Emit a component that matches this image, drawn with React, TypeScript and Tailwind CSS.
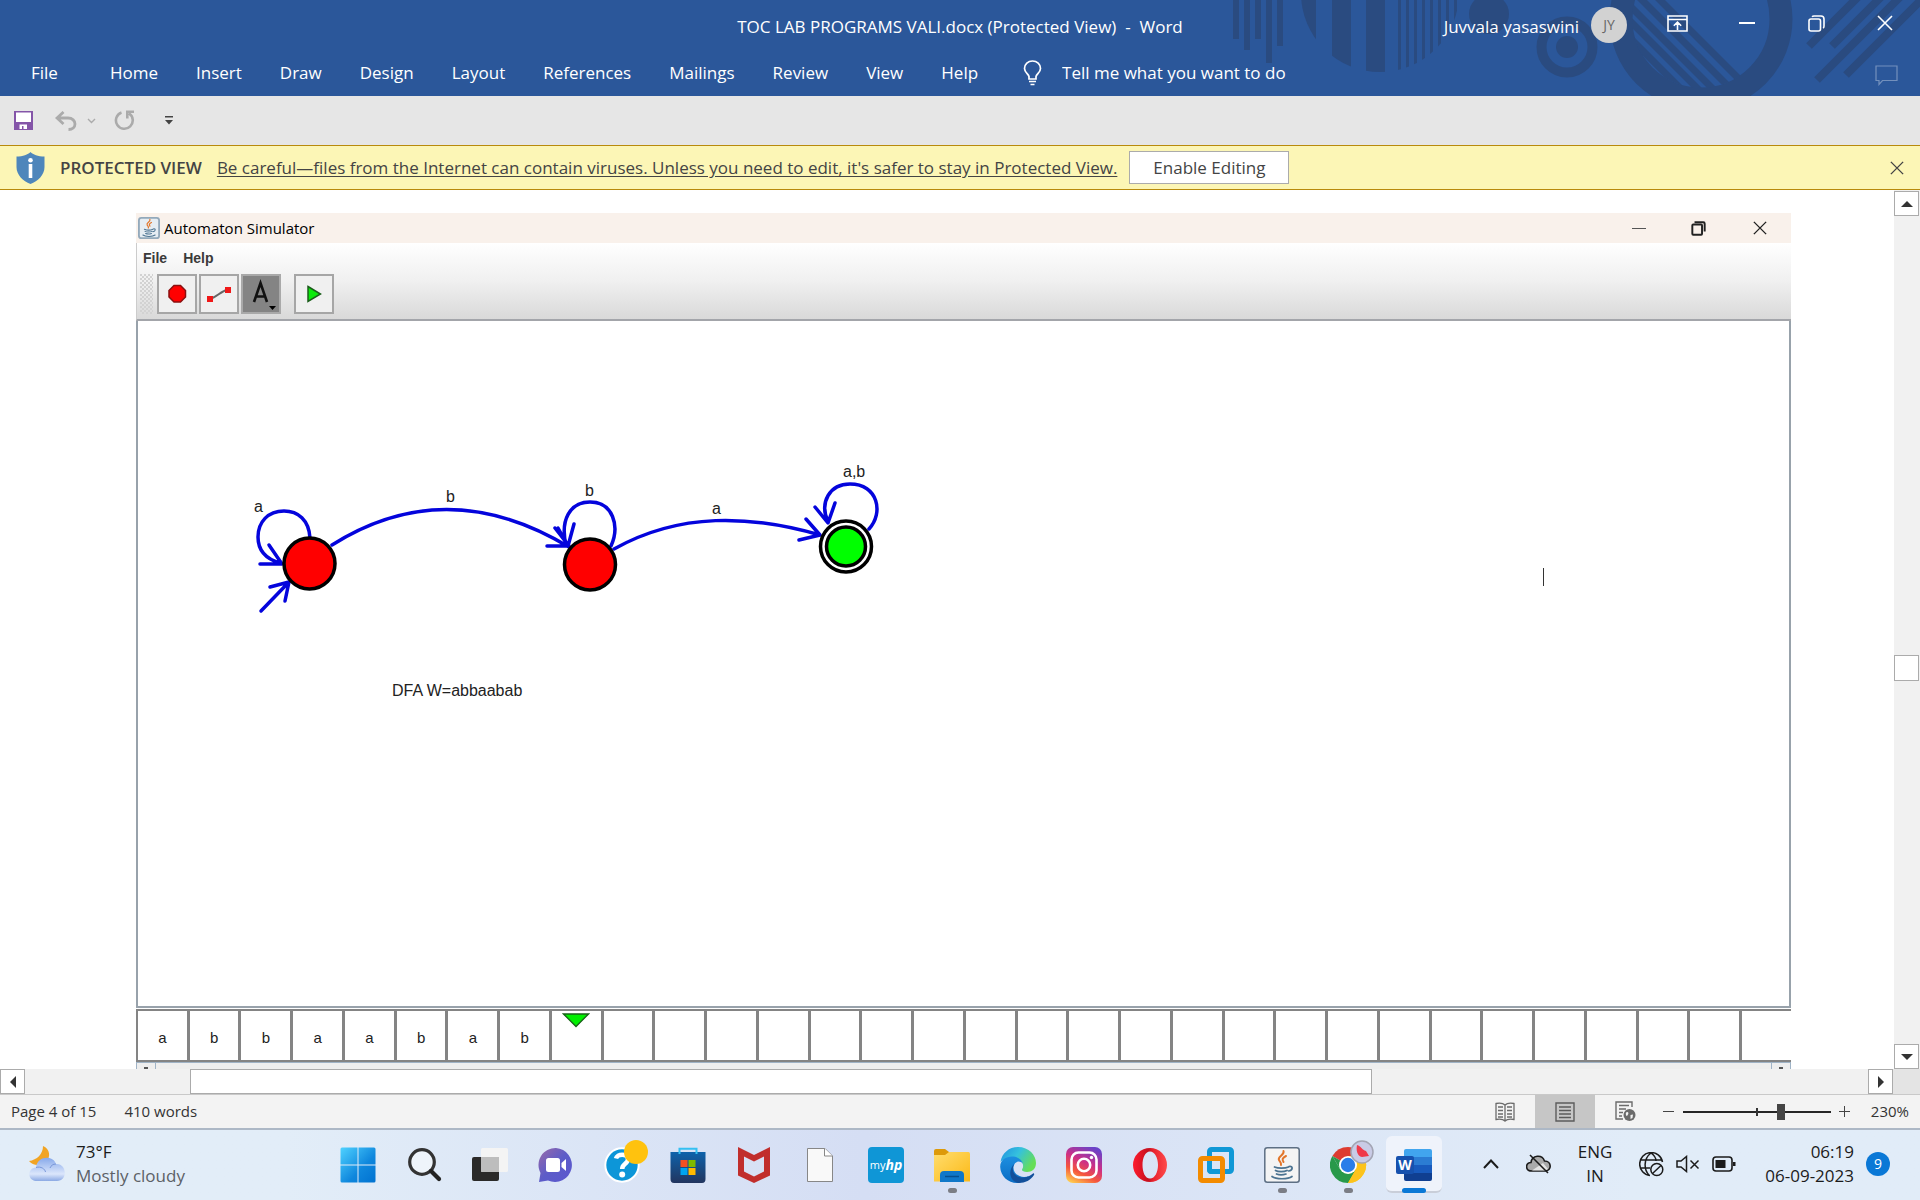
import type { ReactNode } from "react";

const ribbonTabs = ["Home", "Insert", "Draw", "Design", "Layout", "References", "Mailings", "Review", "View", "Help"];
const tape = ["a", "b", "b", "a", "a", "b", "a", "b"];
const TAPE_CELLS = 32;
const HEAD = 8;

function CloseGlyph({ size }: { size: number }) {
  return (
    <svg width={size} height={size} viewBox="0 0 16 16" fill="none" stroke="currentColor" strokeWidth="1.6">
      <path d="M1 1L15 15M15 1L1 15" />
    </svg>
  );
}

function RestoreGlyph() {
  return (
    <svg width="17" height="17" viewBox="0 0 17 17" fill="none" stroke="currentColor" strokeWidth="1.6">
      <rect x="1" y="4" width="11.5" height="12" rx="2" />
      <path d="M4 1.8C4.6 1.2 5.3 1 6 1H13C15 1 16 2.200 16 4V11C16 12 15.800 12.600 15.200 13.200" />
    </svg>
  );
}

function HeaderArt() {
  return (
    <svg className="absolute right-0 top-0" width="720" height="96" viewBox="1200 0 720 96" fill="#2a4b80" aria-hidden="true">
      <defs>
        <clipPath id="disc"><circle cx="1380" cy="-7" r="79" /></clipPath>
        <clipPath id="ring"><circle cx="1701" cy="19" r="69" /></clipPath>
      </defs>
      <path d="M1233 0h6v39h-6zM1244 0h6v50h-6zM1255 0h6v39h-6zM1266 0h6v63h-6zM1277 0h6v46h-6z" />
      <g clipPath="url(#disc)">
        <path d="M1300 0h16v96h-16zM1332 0h19v96h-19zM1366 0h19v96h-19zM1398 0h3v96h-3zM1406 0h3v96h-3zM1414 0h3v96h-3zM1422 0h3v96h-3zM1430 0h3v96h-3zM1438 0h3v96h-3zM1446 0h3v96h-3zM1454 0h3v96h-3z" />
      </g>
      <circle cx="1489" cy="14" r="20" />
      <circle cx="1567" cy="47" r="25.500" fill="none" stroke="#2a4b80" strokeWidth="10" />
      <circle cx="1567" cy="47" r="11" />
      <circle cx="1701" cy="19" r="80" fill="none" stroke="#2a4b80" strokeWidth="23" />
      <g clipPath="url(#ring)" stroke="#2a4b80" strokeWidth="7">
        <path d="M1650 -10L1760 100M1632 -10L1742 100M1614 -10L1724 100M1599 -10L1709 100M1582 -10L1692 100" />
      </g>
      <g stroke="#2a4b80" strokeWidth="8">
        <path d="M1809 46L1865 -10M1832 46L1888 -10M1817 80L1907 -10M1846 75L1930 -9" />
      </g>
    </svg>
  );
}

function TitleBar() {
  return (
    <header className="relative h-24 shrink-0 overflow-hidden bg-[#2b579a] text-white">
      <HeaderArt />
      <div className="relative grid h-[54px] grid-cols-[1fr_auto_1fr] items-center">
        <span />
        <h1 className="whitespace-pre text-[17px] leading-6">TOC LAB PROGRAMS VALI.docx (Protected View)  -  Word</h1>
        <div className="flex items-center justify-end pr-[27px]">
          <span className="text-[17px] leading-6">Juvvala yasaswini</span>
          <span className="ml-3 -mt-1 flex size-9 items-center justify-center rounded-full bg-[#d2d2d2] text-sm text-[#666]">JY</span>
          <button aria-label="Ribbon display options" className="ml-10 -mt-2">
            <svg width="21" height="17" viewBox="0 0 21 17" fill="none" stroke="currentColor" strokeWidth="1.600">
              <path d="M1 1H20V16H1ZM1 4.500H20M10.500 15V7.500M6.800 10.800L10.500 7.200L14.200 10.800" />
            </svg>
          </button>
          <button aria-label="Minimize" className="ml-[51px] -mt-2 flex h-4 w-4 items-center"><span className="h-0.5 w-full bg-white" /></button>
          <button aria-label="Restore" className="ml-[53px] -mt-2"><RestoreGlyph /></button>
          <button aria-label="Close" className="ml-[52px] -mt-2"><CloseGlyph size={16} /></button>
        </div>
      </div>
      <nav className="relative flex h-[42px] items-center pb-1 pl-[31px] text-[17px]">
        <button>File</button>
        <div className="ml-[52px] flex gap-[38px]">
          {ribbonTabs.map((t) => <button key={t}>{t}</button>)}
        </div>
        <label className="ml-[45px] flex items-center gap-5">
          <svg width="19" height="26" viewBox="0 0 19 26" fill="none" stroke="currentColor" strokeWidth="1.700">
            <path d="M6 19V16.500C5.500 14 1.500 12.500 1.500 8.500C1.500 4 5 1 9.500 1S17.500 4 17.500 8.500C17.500 12.500 13.500 14 13 16.500V19ZM6 21.500H13M7.500 24.500H11.500" />
          </svg>
          <input aria-label="Tell me what you want to do" placeholder="Tell me what you want to do" className="w-64 bg-transparent outline-none placeholder:text-white" />
        </label>
        <button aria-label="Comments" className="ml-auto mr-[22px] mt-1 text-[#7390bd]">
          <svg width="23" height="21" viewBox="0 0 23 21" fill="none" stroke="currentColor" strokeWidth="1.200">
            <path d="M1 1H22V15.500H7.500L4 19.500V15.500H1Z" />
          </svg>
        </button>
      </nav>
    </header>
  );
}

function QuickAccess() {
  return (
    <div className="flex h-[49px] shrink-0 items-center bg-[#e6e6e6] pl-3.5 text-[#ababab]">
      <button aria-label="Save">
        <svg width="19" height="19" viewBox="0 0 19 19">
          <path d="M0 0H19V19H0Z" fill="#8455a8" />
          <path d="M2 1.500H17V11H2ZM5.500 13.500H13V18H9.500V15H8V18H5.500Z" fill="#fff" />
        </svg>
      </button>
      <button aria-label="Undo" className="ml-[22px]">
        <svg width="22" height="20" viewBox="0 0 22 20" fill="none" stroke="currentColor" strokeWidth="2.800">
          <path d="M8.500 1L2 7L8.500 13M2 7H13C17.500 7 20 10 20 13S17.500 18.500 13.500 18.500" />
        </svg>
      </button>
      <button aria-label="Undo history" className="ml-2.5">
        <svg width="9" height="6" viewBox="0 0 9 6" fill="none" stroke="currentColor" strokeWidth="1.400"><path d="M1 1L4.500 4.500L8 1" /></svg>
      </button>
      <button aria-label="Repeat" className="ml-[18px]">
        <svg width="21" height="21" viewBox="0 0 21 21" fill="none" stroke="currentColor" strokeWidth="2.600">
          <path d="M7.500 2.500A8.400 8.400 0 1 0 15 3.400M20 1.800H13.300V8.500" />
        </svg>
      </button>
      <button aria-label="Customize Quick Access Toolbar" className="ml-[30px] text-[#444]">
        <svg width="8" height="9" viewBox="0 0 8 9" fill="currentColor"><path d="M0 0H8V1.500H0ZM0 4H8L4 8.500Z" /></svg>
      </button>
    </div>
  );
}

function ProtectedBar() {
  return (
    <div className="flex h-[45px] shrink-0 items-center border-y border-[#b88a0c] bg-[#fcf6b6] text-[17px] text-[#444]">
      <svg className="ml-4" width="29" height="32" viewBox="0 0 29 32">
        <path d="M14.500 0C17 2.500 22 4.500 28.500 4.500V15C28.500 23 22 29 14.500 32C7 29 .5 23 .5 15V4.500C7 4.500 12 2.500 14.500 0Z" fill="#4e86bb" />
        <path d="M12.700 12H16.300V26H12.700Z" fill="#fff" /><circle cx="14.500" cy="8.200" r="2.300" fill="#fff" />
      </svg>
      <span className="ml-[15px] font-semibold">PROTECTED VIEW</span>
      <a href="#protected" className="ml-[15px] underline underline-offset-2">Be careful—files from the Internet can contain viruses. Unless you need to edit, it's safer to stay in Protected View.</a>
      <button className="ml-3 h-[33px] w-40 border border-[#ababab] bg-white">Enable Editing</button>
      <button aria-label="Close message" className="ml-auto mr-4"><CloseGlyph size={14} /></button>
    </div>
  );
}

function JavaCup() {
  return (
    <g fill="none" strokeLinecap="round">
      <path d="M19.500 4C21 8 13 9.500 15 13C16 15 17.500 15.500 17 18M22 9C18 11 18 12.500 19.500 15" stroke="#e2762b" strokeWidth="2" />
      <path d="M10.500 20C14 21.500 21 21.500 24.500 20M11.500 23.500C14 25 20 25 23 23.500M12.500 27C15 28 19 28 22 27M25 19.500C29.500 18.500 29 23.500 24.500 24M8 29.500C12 32.500 24 32.500 28 29.500" stroke="#4b7391" strokeWidth="1.700" />
    </g>
  );
}

function ToolButton({ label, active, children, className = "" }: { label: string; active?: boolean; children: ReactNode; className?: string }) {
  return (
    <button aria-label={label} className={`flex size-10 items-center justify-center border-2 ${active ? "border-[#a9a9a9] bg-[#848484]" : "border-[#a6a6a6] bg-[#f0f0f0]"} ${className}`}>
      {children}
    </button>
  );
}

function Automaton() {
  return (
    <svg width="800" height="420" viewBox="138 321 800 420" role="img" aria-label="Automaton with three states">
      <g fill="none" stroke="#0404dc" strokeWidth="3.500" strokeLinecap="round" strokeLinejoin="round">
        <path d="M310 538C309 520 298 511 284 511C268 511 258 522 258 537C258 550 266 559 280 563M260 564H282L269 545" />
        <path d="M261 611L289 582M270 587L289 582L285 601" />
        <path d="M332 545Q446 473 569 547M547 546H569L555 528" />
        <path d="M611 546C620 526 613 502 590 502C570 502 560 520 566 545M558 528L568 546L574 524" />
        <path d="M614 549C680 512 750 515 820 535M799 540L820 535L806 519" />
        <path d="M869 529C884 513 878 484 850 484C830 484 819 502 828 522M815 507L828 523L835 503" />
      </g>
      <g stroke="#000" strokeWidth="3.500">
        <circle cx="309.500" cy="563.500" r="25.500" fill="#f00" />
        <circle cx="590" cy="564.500" r="25.500" fill="#f00" />
        <circle cx="846" cy="546.500" r="25.500" fill="#fff" />
        <circle cx="846" cy="546.500" r="19.500" fill="#0f0" />
      </g>
      <g className="fill-[#222] font-['Liberation_Sans',Arial,sans-serif] text-base">
        <text x="254" y="512">a</text>
        <text x="446" y="502">b</text>
        <text x="585" y="496">b</text>
        <text x="712" y="514">a</text>
        <text x="843" y="477">a,b</text>
        <text x="392" y="696">DFA W=abbaabab</text>
      </g>
    </svg>
  );
}

function Simulator() {
  return (
    <section className="mt-[23px] ml-[136px] mr-[103px] flex min-w-0 flex-1 flex-col overflow-hidden bg-white">
      <div className="flex h-[30px] shrink-0 items-center bg-[#f9f1eb] pl-0.5 text-black">
        <svg width="22" height="22" viewBox="0 0 36 36">
          <rect x="1.500" y="1.500" width="33" height="33" rx="4" fill="#e6edf3" stroke="#93a9bb" strokeWidth="3" />
          <JavaCup />
        </svg>
        <h2 className="ml-1 text-[15px] leading-6">Automaton Simulator</h2>
        <div className="ml-auto mr-6 flex items-center text-[#222]">
          <button aria-label="Minimize window" className="flex h-4 w-3.5 items-center"><span className="h-px w-full bg-[#555]" /></button>
          <button aria-label="Restore window" className="ml-[45px]">
            <svg width="15" height="15" viewBox="0 0 17 17" fill="none" stroke="currentColor" strokeWidth="2.200">
              <rect x="1.500" y="4" width="11" height="11.500" rx="1" /><path d="M4 1.500H14Q15.500 1.500 15.500 3V12" />
            </svg>
          </button>
          <button aria-label="Close window" className="ml-[47px]"><CloseGlyph size={14} /></button>
        </div>
      </div>
      <div className="h-[78px] shrink-0 border-b-2 border-[#a3a5aa] border-l border-l-[#ccc] bg-linear-to-b from-white via-[#f0f0f0] to-[#d9d9d9]">
        <div className="flex gap-4 pl-1.5 pt-[3px] font-['Liberation_Sans',Arial,sans-serif] text-sm leading-6 font-bold text-[#3a3a3a]">
          <button>File</button>
          <button>Help</button>
        </div>
        <div className="flex items-center pt-1 pl-[3px]">
          <svg width="13" height="40" aria-hidden="true">
            <defs><pattern id="grip" width="4" height="4" patternUnits="userSpaceOnUse"><path d="M0 0h2v2h-2zM2 2h2v2h-2z" fill="#d2d2d2" /></pattern></defs>
            <rect width="13" height="40" fill="url(#grip)" />
          </svg>
          <ToolButton label="State" className="ml-1">
            <svg width="20" height="20" viewBox="0 0 20 20"><path d="M7 1.500H13.500L18.500 6.500V13L13.500 18H7L2 13V6.500Z" fill="#f00" stroke="#8b0f0f" strokeWidth="1.500" /></svg>
          </ToolButton>
          <ToolButton label="Transition" className="ml-0.5">
            <svg width="24" height="16" viewBox="0 0 24 16"><path d="M3 13C10 11 14 5 21 3.500" stroke="#666" strokeWidth="2" fill="none" /><path d="M0 10h6v6H0zM18 1h6v6h-6z" fill="#f01818" /></svg>
          </ToolButton>
          <ToolButton label="Label" active className="ml-0.5">
            <svg width="34" height="34" viewBox="0 0 34 34"><path d="M10 25L16.500 6L23 25M12 19.500H21" fill="none" stroke="#111" strokeWidth="2.600" /><path d="M25 29H32L28.500 33Z" fill="#000" /></svg>
          </ToolButton>
          <ToolButton label="Run" className="ml-[13px]">
            <svg width="16" height="18" viewBox="0 0 16 18"><path d="M2 1.500L14.500 9L2 16.500Z" fill="#0bea0b" stroke="#1b5e1b" strokeWidth="1.500" /></svg>
          </ToolButton>
        </div>
      </div>
      <div className="relative min-h-0 flex-1 overflow-hidden border-x-2 border-b-2 border-[#98a2ab] bg-white">
        <Automaton />
        <span className="absolute top-[247px] right-[245px] h-[18px] w-px bg-[#333]" />
      </div>
      <div className="mt-px grid h-[53px] shrink-0 grid-cols-[repeat(31,minmax(0,1fr))_49px] border-y-2 border-l-2 border-[#848484]">
        {Array.from({ length: TAPE_CELLS }, (_, i) => (
          <div key={i} className="relative flex items-center justify-center border-r-[3px] border-[#848484] pt-1.5 font-['Liberation_Sans',Arial,sans-serif] text-[15px] text-[#222] last:border-r-0">
            {tape[i]}
            {i === HEAD && (
              <svg className="absolute top-0.5 left-1/2 -translate-x-1/2" width="28" height="15" viewBox="0 0 28 15"><path d="M1.500 1H26.500L14 13.500Z" fill="#00f000" stroke="#176117" strokeWidth="1.300" /></svg>
            )}
          </div>
        ))}
      </div>
      <div className="flex h-[7px] shrink-0 justify-between border-x border-t border-[#9fb3c6] bg-[#eeeeee]">
        <span className="flex w-[19px] justify-center border-r border-[#9fb3c6] pt-1"><span className="h-[3px] w-1 bg-[#555]" /></span>
        <span className="flex w-[19px] justify-center border-l border-[#9fb3c6] pt-1"><span className="h-[3px] w-1 bg-[#555]" /></span>
      </div>
    </section>
  );
}

function ScrollArrow({ label, d }: { label: string; d: string }) {
  return (
    <button aria-label={label} className="flex h-[25px] w-[25px] shrink-0 items-center justify-center border border-[#ababab] bg-white">
      <svg width="12" height="12" viewBox="0 0 12 12" fill="#333"><path d={d} /></svg>
    </button>
  );
}

function DocumentArea() {
  return (
    <main className="flex min-h-0 flex-1 flex-col bg-white">
      <div className="flex min-h-0 flex-1">
        <Simulator />
        <div className="flex w-[26px] shrink-0 flex-col bg-[#f1f1f1] pt-px">
          <ScrollArrow label="Scroll up" d="M0 9L6 3L12 9Z" />
          <div className="flex-[438]" />
          <div className="h-[26px] w-[25px] border border-[#ababab] bg-white" />
          <div className="flex-[363]" />
          <ScrollArrow label="Scroll down" d="M0 3L6 9L12 3Z" />
        </div>
      </div>
      <div className="flex h-[26px] shrink-0 border-b border-[#c9c9c9] bg-[#f1f1f1]">
        <ScrollArrow label="Scroll left" d="M9 0L3 6L9 12Z" />
        <div className="flex-[165]" />
        <div className="h-[25px] flex-[1181] border border-[#ababab] bg-white" />
        <div className="flex-[497]" />
        <ScrollArrow label="Scroll right" d="M3 0L9 6L3 12Z" />
        <div className="w-[27px] bg-[#e4e4e4]" />
      </div>
    </main>
  );
}

function StatusBar() {
  return (
    <footer className="flex h-[35px] shrink-0 items-center border-b-2 border-[#adb8c6] bg-[#f3f3f3] pr-[11px] pl-[11px] text-[15px] text-[#333]">
      <button>Page 4 of 15</button>
      <button className="ml-7">410 words</button>
      <button aria-label="Read mode" className="ml-auto flex h-full w-[60px] items-center justify-center text-[#6b6b6b]">
        <svg width="20" height="20" viewBox="0 0 20 20" fill="none" stroke="currentColor" strokeWidth="1.300">
          <path d="M10 2.500V19.500M10 3C8 1 4 1 1 1.500V17.500C4 17 8 17 10 19C12 17 16 17 19 17.500V1.500C16 1 12 1 10 3M3 5H8M3 8.500H8M3 12H8M12 5H17M12 8.500H17M12 12H17M3 15H8M12 15H17" />
        </svg>
      </button>
      <button aria-label="Print layout" className="flex h-full w-[60px] items-center justify-center bg-[#c6c6c6] text-[#5c5c5c]">
        <svg width="20" height="20" viewBox="0 0 20 20" fill="none" stroke="currentColor" strokeWidth="1.400">
          <path d="M1 1H19V19H1ZM4 5H16M4 8.500H16M4 12H16M4 15.500H16" />
        </svg>
      </button>
      <button aria-label="Web layout" className="flex h-full w-[60px] items-center justify-center text-[#6b6b6b]">
        <svg width="21" height="21" viewBox="0 0 21 21" fill="none" stroke="currentColor" strokeWidth="1.400">
          <path d="M8 18H1V1H17V6M4 4.500H14M4 8H11M4 11.500H8M4 15H7" />
          <circle cx="14.500" cy="14" r="6" fill="#6b6b6b" stroke="none" />
          <path d="M11 11.500C13 10 14 12 13 13.500L12 15C11 15 10.500 13 11 11.500ZM15.500 14L18 13.500L17.500 17L15.500 18Z" fill="#f3f3f3" stroke="none" />
        </svg>
      </button>
      <button aria-label="Zoom out" className="ml-2 flex h-4 w-[11px] items-center"><span className="h-px w-full bg-[#444]" /></button>
      <span className="relative ml-[9px] flex w-[148px] items-center">
        <span className="absolute left-[73px] h-2 w-0.5 bg-[#333]" />
        <input type="range" aria-label="Zoom" aria-valuetext="230%" min="0" max="100" defaultValue="67" className="h-4 w-full appearance-none bg-[linear-gradient(#262626,#262626)] bg-[length:100%_2px] bg-center bg-no-repeat [&::-webkit-slider-thumb]:h-4 [&::-webkit-slider-thumb]:w-2 [&::-webkit-slider-thumb]:appearance-none [&::-webkit-slider-thumb]:bg-[#444]" />
      </span>
      <button aria-label="Zoom in" className="ml-2">
        <svg width="11" height="11" viewBox="0 0 11 11" stroke="#444" strokeWidth="1"><path d="M5.500 0V11M0 5.500H11" /></svg>
      </button>
      <button className="w-[59px] text-right">230%</button>
    </footer>
  );
}

function Svg({ children }: { children: ReactNode }) {
  return <svg width="36" height="36" viewBox="0 0 36 36">{children}</svg>;
}

function BadgedSvg({ children }: { children: ReactNode }) {
  return <svg width="44" height="44" viewBox="0 0 44 44" className="-mt-2 max-w-none shrink-0">{children}</svg>;
}

const apps: { name: string; icon: ReactNode; state?: "open" | "active" }[] = [
  {
    name: "Start",
    icon: (
      <Svg>
        <defs><linearGradient id="win" x1="0" y1="0" x2="1" y2="1"><stop offset="0" stopColor="#4fd2ff" /><stop offset=".6" stopColor="#0f87dd" /><stop offset="1" stopColor="#0072d0" /></linearGradient></defs>
        <path d="M.5 2Q.5 .5 2 .5H17.500V17.500H.5ZM18.500 .5H34Q35.500 .5 35.500 2V17.500H18.500ZM.5 18.500H17.500V35.500H2Q.5 35.500 .5 34ZM18.500 18.500H35.500V34Q35.500 35.500 34 35.500H18.500Z" fill="url(#win)" />
      </Svg>
    ),
  },
  {
    name: "Search",
    icon: <Svg><circle cx="16" cy="15" r="12.300" fill="#eef4fa" stroke="#333" strokeWidth="3.200" /><path d="M25 24L33 32" stroke="#222" strokeWidth="4.200" strokeLinecap="round" /></Svg>,
  },
  {
    name: "Task view",
    icon: <Svg><rect x="0" y="10" width="27" height="24" rx="2" fill="#2b2a29" /><rect x="9" y="1" width="27" height="24" rx="1.500" fill="#f4f4f4" /><path d="M9 10H27V25H10.500Q9 25 9 23.500Z" fill="#bdbdbd" /></Svg>,
  },
  {
    name: "Chat",
    icon: (
      <Svg>
        <defs><linearGradient id="chat" x1="0" y1="0" x2="1" y2="1"><stop offset="0" stopColor="#9b6aa8" /><stop offset=".5" stopColor="#5c5cc8" /><stop offset="1" stopColor="#5b57cf" /></linearGradient></defs>
        <path d="M18 1A17 17 0 1 1 10 33.500L1 35L2.500 26A17 17 0 0 1 18 1Z" fill="url(#chat)" />
        <rect x="8" y="11" width="14" height="14" rx="2.500" fill="#fff" /><path d="M23.500 16L28 12V24L23.500 20Z" fill="#fff" />
      </Svg>
    ),
  },
  {
    name: "Help and support",
    icon: (
      <BadgedSvg>
        <circle cx="18" cy="26" r="16.700" fill="#0d96d8" stroke="#fff" strokeWidth="2" />
        <path d="M12 19.500C13 14.500 23.500 14 24 20C24 25 18 24.500 18.200 30" fill="none" stroke="#fff" strokeWidth="4.500" /><circle cx="18.200" cy="35.500" r="3" fill="#fff" />
        <circle cx="32" cy="13" r="12" fill="#ffc20e" />
      </BadgedSvg>
    ),
  },
  {
    name: "Microsoft Store",
    icon: (
      <Svg>
        <defs><linearGradient id="store" x1="0" y1="0" x2="0" y2="1"><stop offset="0" stopColor="#0e62ab" /><stop offset="1" stopColor="#22355f" /></linearGradient></defs>
        <path d="M.5 5H35.500V32Q35.500 36 32 36H4Q.5 36 .5 32Z" fill="url(#store)" />
        <path d="M9.500 7V1.800H26.500V7" fill="none" stroke="#35c0f2" strokeWidth="2" />
        <path d="M10.500 13h7v7h-7z" fill="#f25022" /><path d="M18.500 13h7v7h-7z" fill="#7fba00" /><path d="M10.500 21h7v7h-7z" fill="#00a4ef" /><path d="M18.500 21h7v7h-7z" fill="#ffb900" />
      </Svg>
    ),
  },
  {
    name: "McAfee",
    icon: <Svg><path d="M2 0L18 8L34 0V28.500L18 36L2 28.500ZM8 9.500V24.500L18 29.500L28 24.500V9.500L18 14.500Z" fill="#c12e2c" fillRule="evenodd" /></Svg>,
  },
  {
    name: "Document",
    icon: <Svg><path d="M5.500 1.500H23L30.500 9V34.500H5.500Z" fill="#f9f9f9" stroke="#878787" /><path d="M22.500 1.500V9H30.500" fill="#fff" stroke="#878787" /></Svg>,
  },
  {
    name: "myHP",
    icon: <span className="flex size-9 items-center justify-center rounded-sm bg-[#0f96d6] text-[11px] text-white">my<b className="text-sm italic">hp</b></span>,
  },
  {
    name: "File Explorer",
    state: "open",
    icon: (
      <Svg>
        <defs><linearGradient id="fold" x1="0" y1="0" x2="1" y2="1"><stop offset="0" stopColor="#ffdd6e" /><stop offset="1" stopColor="#fbb917" /></linearGradient></defs>
        <path d="M0 4Q0 2 2 2H11L15 5V12H0Z" fill="#dd9a0a" /><path d="M0 8H11L15 5H34.500Q36 5 36 7V34.500H0Z" fill="url(#fold)" />
        <path d="M6 35V28Q6 24 10 24H26Q30 24 30 28V35Z" fill="#0f77c9" /><path d="M11 29.500H25" stroke="#054f8f" strokeWidth="1.500" />
      </Svg>
    ),
  },
  {
    name: "Microsoft Edge",
    icon: (
      <Svg>
        <defs>
          <linearGradient id="edgeTop" x1="0" y1="0" x2="1" y2=".5"><stop offset="0" stopColor="#1f8fe0" /><stop offset=".5" stopColor="#35c1de" /><stop offset="1" stopColor="#66de57" /></linearGradient>
          <linearGradient id="edgeLow" x1="0" y1="0" x2="0" y2="1"><stop offset="0" stopColor="#1d8fe0" /><stop offset="1" stopColor="#0a6cc4" /></linearGradient>
        </defs>
        <path d="M.5 15C2 6 9 0 18 0C29 0 36 8 36 16C36 22 32 25 27 25C23 25 21 23.500 22.500 21.500C24 19 23 13 17 12C9 10.500 3 12 .5 15Z" fill="url(#edgeTop)" />
        <path d="M.2 20C0 13 6 9.500 12 9.500C18 9.500 22 13 23 17C20 13 14 14 13.500 20C13 28 22 32 29 29C25 34 21 36 17 36C8 36 .5 29 .2 20Z" fill="url(#edgeLow)" />
        <path d="M14.500 16.500C10 24 15 31 24 30.500C28 30 31 28 33 26.500C34 26 34.500 27 34 28C31 33 25 36 19 36C10 35 7 24 14.500 16.500Z" fill="#12509b" />
      </Svg>
    ),
  },
  {
    name: "Instagram",
    icon: (
      <Svg>
        <defs>
          <linearGradient id="ig" x1=".2" y1="1" x2=".7" y2="0"><stop offset="0" stopColor="#ffc94d" /><stop offset=".3" stopColor="#f5553d" /><stop offset=".6" stopColor="#cd2f86" /><stop offset="1" stopColor="#6a43c8" /></linearGradient>
        </defs>
        <rect width="36" height="36" rx="7" fill="url(#ig)" />
        <g fill="none" stroke="#fff" strokeWidth="2.600"><rect x="5.500" y="5.500" width="25" height="25" rx="7" /><circle cx="18" cy="18" r="6.200" /></g><circle cx="25.500" cy="10.500" r="1.700" fill="#fff" />
      </Svg>
    ),
  },
  {
    name: "Opera",
    icon: (
      <Svg>
        <defs><linearGradient id="op" x1="0" y1="0" x2="1" y2="0"><stop offset="0" stopColor="#ff1b2d" /><stop offset=".45" stopColor="#c4101e" /><stop offset=".6" stopColor="#e8222e" /><stop offset="1" stopColor="#ff4b4b" /></linearGradient></defs>
        <path d="M18 1A17 17 0 1 1 18 35A17 17 0 1 1 18 1ZM18 4.500C13 4.500 10.500 11 10.500 18S13 31.500 18 31.500S26 25 26 18S23 4.500 18 4.500Z" fill="url(#op)" fillRule="evenodd" />
      </Svg>
    ),
  },
  {
    name: "VMware",
    icon: (
      <Svg>
        <rect x="11.500" y="2.500" width="22" height="22" rx="2" fill="none" stroke="#1098d6" strokeWidth="5" />
        <rect x="2.500" y="11.500" width="22" height="22" rx="2" fill="none" stroke="#f38b00" strokeWidth="5" />
        <path d="M11.500 15V22.500Q11.500 24.500 13.500 24.500H20" fill="none" stroke="#1098d6" strokeWidth="5" />
      </Svg>
    ),
  },
  {
    name: "Java",
    state: "open",
    icon: <Svg><rect x=".8" y=".8" width="34.400" height="34.400" rx="2.500" fill="#f4f4f4" stroke="#5d6f84" strokeWidth="1.500" /><JavaCup /></Svg>,
  },
  {
    name: "Google Chrome",
    state: "open",
    icon: (
      <BadgedSvg>
        <path d="M2.400 17A18 18 0 0 1 33.600 17L18 26Z" fill="#dd3c31" /><path d="M33.600 17A18 18 0 0 1 18 44L18 26Z" fill="#fcc31c" /><path d="M18 44A18 18 0 0 1 2.400 17L10.200 30.500L18 35L25.800 30.500Z" fill="#28994a" /><path d="M2.400 17L18 44L18 26Z" fill="#28994a" />
        <path d="M18 17H33.600A18 18 0 0 1 18 44L25.800 30.500Z" fill="#fcc31c" />
        <circle cx="18" cy="26" r="9" fill="#fff" /><circle cx="18" cy="26" r="7.200" fill="#2a7de9" />
        <circle cx="32" cy="13" r="11" fill="#c9cbe6" stroke="#a3a5b4" strokeWidth="1.500" />
        <path d="M27 6C31 7 32 11 36 12L39 17L32 18C27 17 26 11 27 6Z" fill="#f0394a" />
      </BadgedSvg>
    ),
  },
  {
    name: "Word",
    state: "active",
    icon: (
      <Svg>
        <path d="M8 4Q8 2 10 2H34Q36 2 36 4V10H8Z" fill="#41a5ee" /><path d="M8 10H36V18H8Z" fill="#2b7cd3" /><path d="M8 18H36V26H8Z" fill="#185abd" /><path d="M8 26H36V32Q36 34 34 34H10Q8 34 8 32Z" fill="#103f91" />
        <rect x="0" y="9" width="18" height="18" rx="2" fill="#1651ae" />
        <text x="9" y="23" textAnchor="middle" fill="#fff" className="text-sm font-bold">W</text>
      </Svg>
    ),
  },
];

function Taskbar() {
  return (
    <footer className="grid h-[70px] shrink-0 grid-cols-[325px_auto_1fr] items-center bg-linear-to-r from-[#e2edf8] from-15% via-[#d5def4] via-45% to-[#e1ecf8] to-85% text-[17px] leading-6 text-[#1b1b1b]">
      <button className="flex items-center gap-[11px] pb-0.5 pl-[29px] text-left">
        <svg width="36" height="36" viewBox="0 0 36 36">
          <defs><linearGradient id="cl" x1="0" y1="0" x2="0" y2="1"><stop offset="0" stopColor="#86a8ea" /><stop offset=".7" stopColor="#dbe6fb" /><stop offset="1" stopColor="#8ba9e4" /></linearGradient></defs>
          <path d="M14 0C21 3 22 11 17 16C12 20 4 20 0 15C8 14 14 8 14 0Z" fill="#f1a424" />
          <path d="M8 35C-2 35 -2 22 7 21.500C8 9 25 9 27 18C38 17 39 35 28 35Z" fill="url(#cl)" />
          <path d="M7 21.500C12 20 16 23 16.500 26M27 18C24 18 22 19.500 21 22" fill="none" stroke="#7896d8" />
        </svg>
        <span className="flex flex-col"><span>73°F</span><span className="text-[#5c6166]">Mostly cloudy</span></span>
      </button>
      <div className="flex h-full items-center">
        {apps.map((a) => (
          <button key={a.name} aria-label={a.name} className="relative flex h-full w-[66px] items-center justify-center">
            {a.state === "active" && <span className="absolute inset-x-[5px] top-1.5 bottom-[7px] rounded-md border-b-2 border-[#c9ced9] bg-[#eff3fb]" />}
            <span className="relative flex size-9">{a.icon}</span>
            {a.state === "open" && <span className="absolute bottom-[7px] h-[5px] w-[9px] rounded-full bg-[#7b7d85]" />}
            {a.state === "active" && <span className="absolute bottom-[7px] h-[5px] w-6 rounded-full bg-[#0a78d6]" />}
          </button>
        ))}
      </div>
      <div className="flex items-center justify-end pr-[30px] pb-0.5">
        <button aria-label="Show hidden icons">
          <svg width="16" height="10" viewBox="0 0 16 10" fill="none" stroke="currentColor" strokeWidth="2"><path d="M1 9L8 1.500L15 9" /></svg>
        </button>
        <button aria-label="OneDrive" className="ml-[27px]">
          <svg width="25" height="20" viewBox="0 0 25 20">
            <path d="M6 17C-1 17 -1 9 5 8.500C6 1 16 0 18.500 7C26 7 26 17 19 17Z" fill="#aaa" stroke="#1b1b1b" strokeWidth="1.600" /><path d="M6 16.500L17 9L22 15L19 16.500Z" fill="#e4e4e4" />
            <path d="M4 1L22 19" stroke="#1b1b1b" strokeWidth="1.600" />
          </svg>
        </button>
        <button className="ml-[27px] flex flex-col items-center"><span>ENG</span><span>IN</span></button>
        <button aria-label="Network, volume and battery" className="ml-[27px] flex items-center gap-3">
          <svg width="25" height="25" viewBox="0 0 25 25" fill="none" stroke="currentColor" strokeWidth="1.500">
            <path d="M23.500 10A11.500 11.500 0 1 0 11 23.500M2 8H23M2 16H11M12 1C4 7 5 18 10 23M12 1C15 3 17 6 17 9" /><circle cx="17.800" cy="17.500" r="6" /><path d="M13.500 21.500L22 13.500" />
          </svg>
          <svg width="24" height="18" viewBox="0 0 24 18" fill="none" stroke="currentColor" strokeWidth="1.500"><path d="M1 6H5L10.500 1.500V16.500L5 12H1ZM14.500 5.500L22.500 13.500M22.500 5.500L14.500 13.500" /></svg>
          <svg width="24" height="16" viewBox="0 0 24 16" fill="none" stroke="currentColor" strokeWidth="1.600"><rect x="1" y="1" width="19" height="14" rx="3" /><path d="M3.500 4H13.500V12H3.500Z" fill="currentColor" stroke="none" /><path d="M21 6H23.500V10H21Z" fill="currentColor" stroke="none" /></svg>
        </button>
        <button className="ml-[29px] flex flex-col items-end"><span>06:19</span><span>06-09-2023</span></button>
        <button aria-label="9 notifications" className="ml-3 flex size-6 items-center justify-center rounded-full bg-[#0a78d6] text-sm text-white">9</button>
      </div>
    </footer>
  );
}

export default function App() {
  return (
    <div className="flex h-screen flex-col overflow-hidden font-['Open_Sans','Noto_Sans',sans-serif]">
      <TitleBar />
      <QuickAccess />
      <ProtectedBar />
      <DocumentArea />
      <StatusBar />
      <Taskbar />
    </div>
  );
}
